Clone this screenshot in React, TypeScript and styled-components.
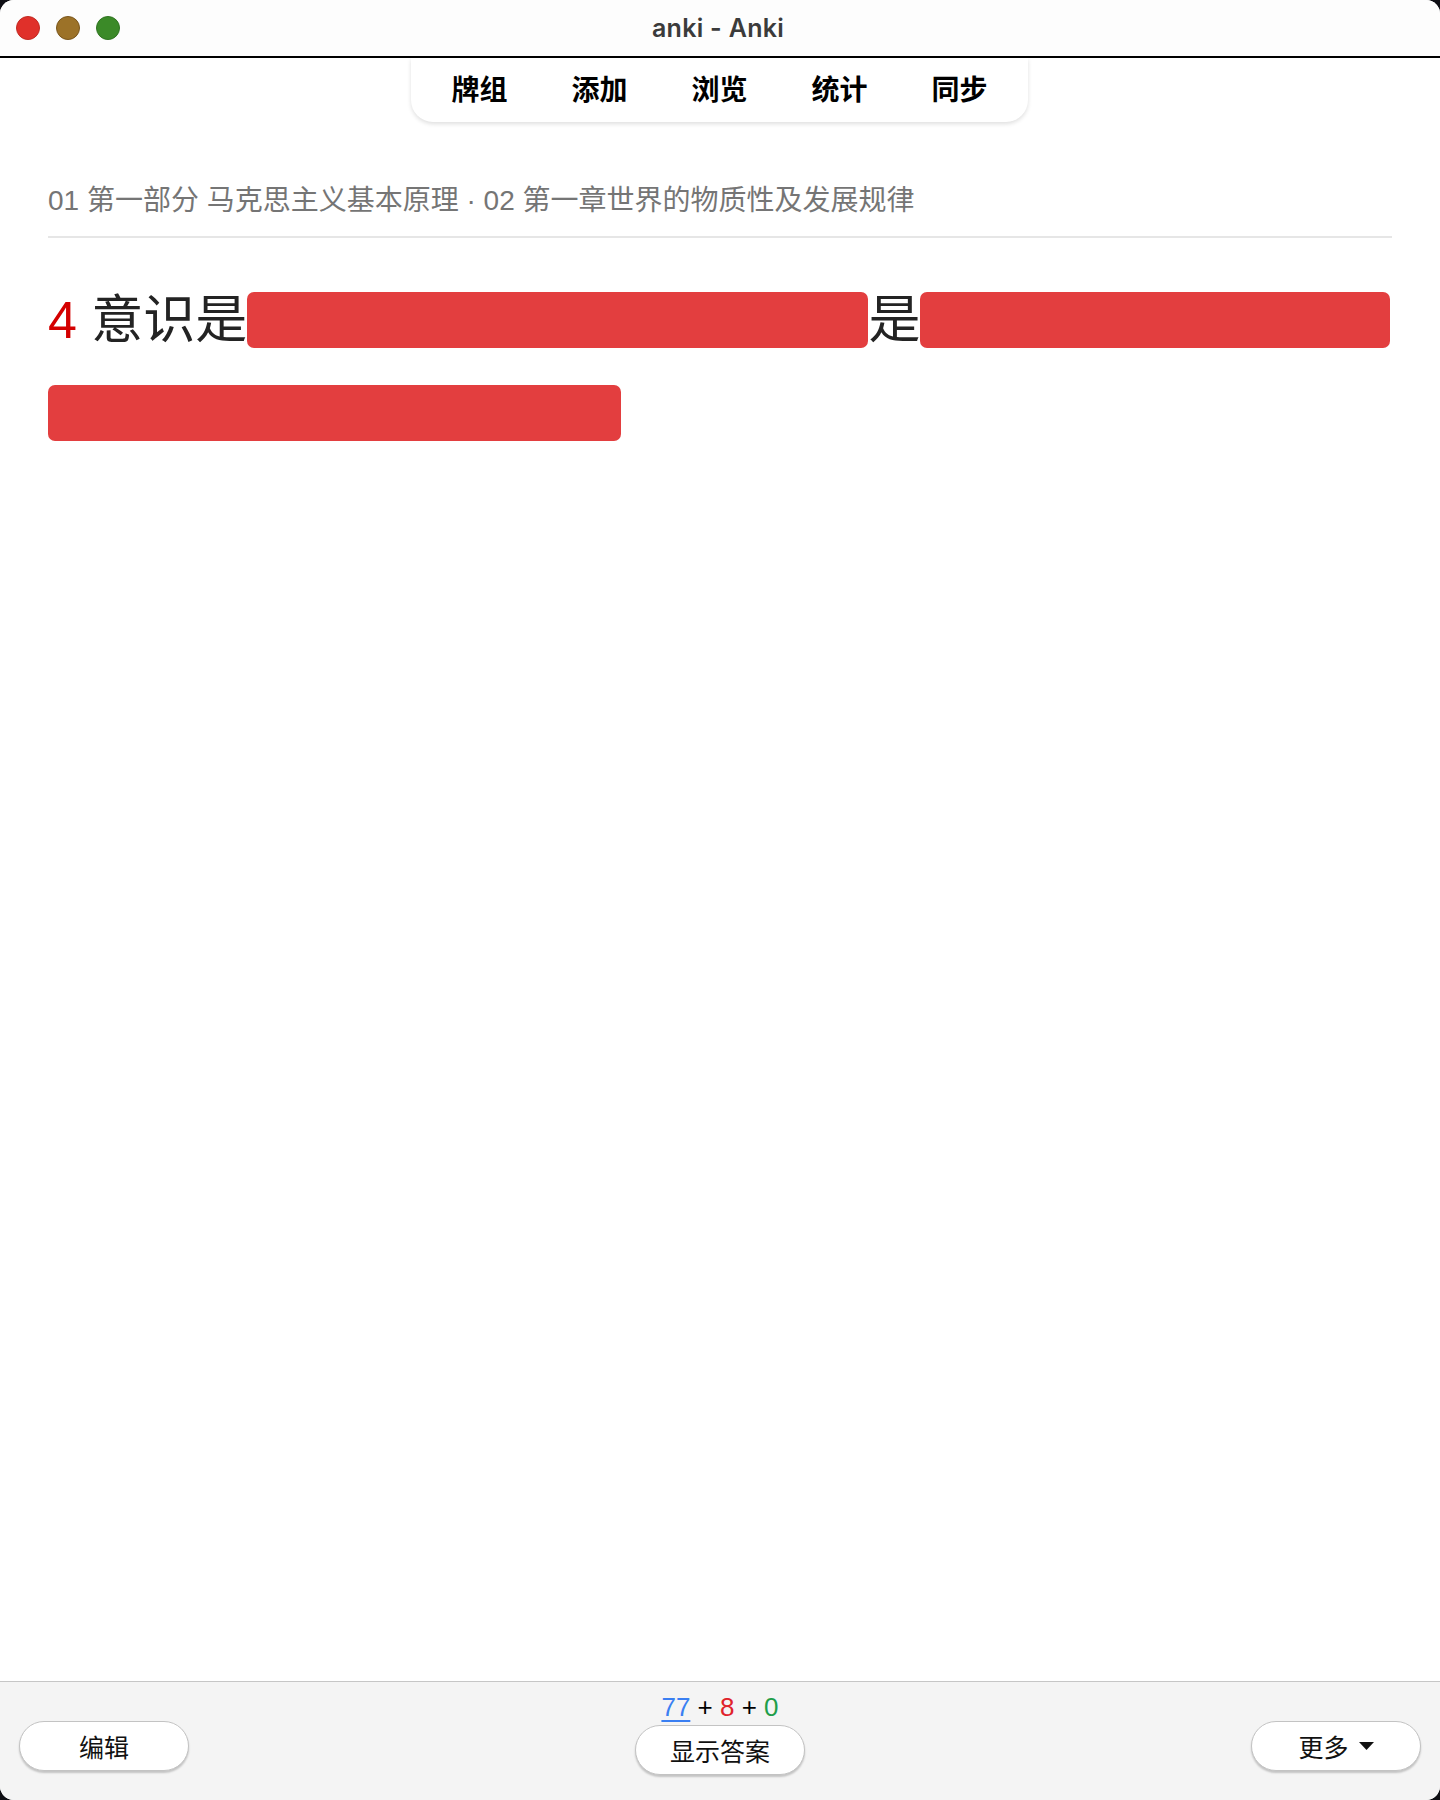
import React from 'react';
import styled, { createGlobalStyle } from 'styled-components';

const CJK = `"Noto Sans CJK SC", sans-serif`;
const SANS = `"Liberation Sans", "Noto Sans CJK SC", sans-serif`;

const GlobalStyle = createGlobalStyle`
  html, body {
    margin: 0;
    padding: 0;
    background: #0e0f14;
  }
  #root {
    width: 1440px;
    height: 1800px;
  }
`;

const Window = styled.div`
  width: 1440px;
  height: 1800px;
  border-radius: 14px;
  overflow: hidden;
  background: #ffffff;
  display: flex;
  flex-direction: column;
`;

const TitleBar = styled.div`
  height: 56px;
  flex-shrink: 0;
  background: #fdfdfd;
  border-bottom: 2px solid #000;
  display: grid;
  grid-template-columns: 1fr auto 1fr;
  align-items: center;
  padding: 0 16px;
`;

const Lights = styled.div`
  display: flex;
  gap: 16px;
`;

const Light = styled.span<{ $fill: string; $edge: string }>`
  width: 22px;
  height: 22px;
  border-radius: 50%;
  background: ${(p) => p.$fill};
  border: 1px solid ${(p) => p.$edge};
`;

const Title = styled.div`
  font-family: Inter, "Open Sans", sans-serif;
  font-weight: 600;
  font-size: 25px;
  color: #3b3b3b;
  letter-spacing: 0.3px;
  margin-left: -4px;
`;

const Main = styled.main`
  flex: 1;
  display: flex;
  flex-direction: column;
`;

const Tabs = styled.nav`
  align-self: center;
  margin-left: -1px;
  display: flex;
  gap: 64px;
  padding: 0 40px;
  height: 64px;
  align-items: center;
  background: #fff;
  border-radius: 0 0 22px 22px;
  box-shadow: 0 2px 4px rgba(0, 0, 0, 0.13);
`;

const Tab = styled.span`
  font-family: ${CJK};
  font-weight: 700;
  font-size: 28px;
  color: #000;
  padding-bottom: 4px;
`;

const Card = styled.section`
  padding: 0 48px;
`;

const Breadcrumb = styled.div`
  margin-top: 61px;
  padding-bottom: 17px;
  border-bottom: 2px solid #e6e6e6;
  font-family: ${SANS};
  font-size: 28px;
  line-height: 36px;
  color: #757575;
`;

const Question = styled.div`
  margin-top: 54px;
  display: flex;
  flex-wrap: wrap;
  align-items: center;
  row-gap: 37px;
  font-family: ${SANS};
  font-size: 52px;
  line-height: 56px;
  color: #232323;
`;

const Words = styled.span`
  white-space: pre;
`;

const Number = styled.span`
  color: #d40000;
`;

const Cloze = styled.span<{ $w: number }>`
  display: block;
  width: ${(p) => p.$w}px;
  height: 56px;
  border-radius: 7px;
  background: #e33e3f;
`;

const BottomBar = styled.footer`
  height: 119px;
  flex-shrink: 0;
  box-sizing: border-box;
  border-top: 1px solid #c6c6c6;
  background: #f4f4f4;
  display: grid;
  grid-template-columns: 1fr auto 1fr;
  align-items: start;
  padding: 0 19px;
`;

const Side = styled.div<{ $end?: boolean }>`
  display: flex;
  justify-content: ${(p) => (p.$end ? 'flex-end' : 'flex-start')};
  padding-top: 39px;
`;

const Center = styled.div`
  display: flex;
  flex-direction: column;
  align-items: center;
  padding-top: 10px;
  gap: 3px;
`;

const Counts = styled.div`
  font-family: ${SANS};
  font-size: 26px;
  line-height: 30px;
  color: #000;
  white-space: pre;
`;

const Count = styled.span<{ $c: string; $u?: boolean }>`
  color: ${(p) => p.$c};
  text-decoration: ${(p) => (p.$u ? 'underline' : 'none')};
  text-underline-offset: 4px;
`;

const Button = styled.button`
  width: 170px;
  height: 50px;
  box-sizing: border-box;
  border-radius: 25px;
  border: 1px solid #c3c3c3;
  background: #fff;
  box-shadow: 0 2px 2px rgba(0, 0, 0, 0.2);
  font-family: ${CJK};
  font-size: 25px;
  color: #111;
  display: flex;
  align-items: center;
  justify-content: center;
  gap: 10px;
  padding: 0;
`;

const Caret = () => (
  <svg width="15" height="8" viewBox="0 0 15 8">
    <path d="M0 0 H15 L7.5 8 Z" fill="#111" />
  </svg>
);

export default function App() {
  return (
    <>
      <GlobalStyle />
      <Window>
        <TitleBar>
          <Lights>
            <Light $fill="#e0302a" $edge="#c22a22" />
            <Light $fill="#9c7228" $edge="#7a561c" />
            <Light $fill="#3b8a28" $edge="#2f7421" />
          </Lights>
          <Title>anki - Anki</Title>
          <span />
        </TitleBar>
        <Main>
          <Tabs>
            <Tab>牌组</Tab>
            <Tab>添加</Tab>
            <Tab>浏览</Tab>
            <Tab>统计</Tab>
            <Tab>同步</Tab>
          </Tabs>
          <Card>
            <Breadcrumb>
              01 第一部分 马克思主义基本原理 · 02 第一章世界的物质性及发展规律
            </Breadcrumb>
            <Question>
              <Words>
                <Number>4</Number> 意识是
              </Words>
              <Cloze $w={621} />
              <Words>是</Words>
              <Cloze $w={470} />
              <Cloze $w={573} />
            </Question>
          </Card>
        </Main>
        <BottomBar>
          <Side>
            <Button>编辑</Button>
          </Side>
          <Center>
            <Counts>
              <Count $c="#3a7ff2" $u>77</Count> + <Count $c="#e0232b">8</Count> +{' '}
              <Count $c="#1f9e4a">0</Count>
            </Counts>
            <Button>显示答案</Button>
          </Center>
          <Side $end>
            <Button>
              更多
              <Caret />
            </Button>
          </Side>
        </BottomBar>
      </Window>
    </>
  );
}
